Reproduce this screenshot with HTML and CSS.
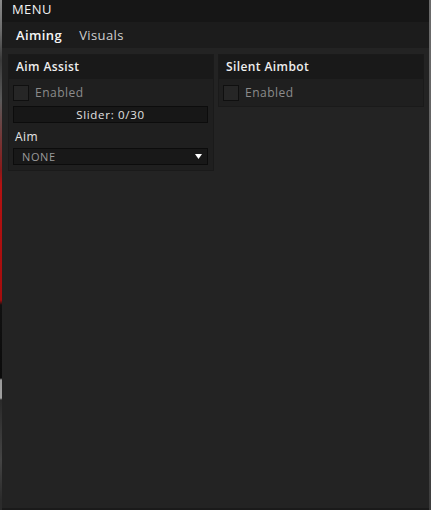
FILE: index.html
```html
<!DOCTYPE html>
<html>
<head>
<meta charset="utf-8">
<link rel="stylesheet" href="styles.css">
</head>
<body>
<div class="window">
  <div class="titlebar">MENU</div>
  <div class="tabs">
    <span class="tab active">Aiming</span>
    <span class="tab">Visuals</span>
  </div>
  <div class="content">
    <section class="panel">
      <div class="panel-head">Aim Assist</div>
      <div class="panel-body">
        <label class="check"><span class="box"></span><span class="check-label">Enabled</span></label>
        <div class="slider">Slider: 0/30</div>
        <div class="field-label">Aim</div>
        <div class="dropdown"><span>NONE</span><svg class="caret" width="7" height="5" viewBox="0 0 7 5"><path d="M0 0H7L3.5 5Z" fill="#fff"/></svg></div>
      </div>
    </section>
    <section class="panel">
      <div class="panel-head">Silent Aimbot</div>
      <div class="panel-body">
        <label class="check"><span class="box"></span><span class="check-label">Enabled</span></label>
      </div>
    </section>
  </div>
</div>
</body>
</html>
```
FILE: styles.css
```css
html, body {
  margin: 0;
  padding: 0;
}
body {
  width: 431px;
  height: 510px;
  overflow: hidden;
  background:
    linear-gradient(to bottom, #8a8a8a 0, #6d6d6d 30px, #3a3a3a 60px, #5a5a5a 100px, #8a1a1a 170px, #b31212 185px, #a50d0d 300px, #111 305px, #0b0b0b 378px, #9a9a9a 380px, #a0a0a0 398px, #2a2a2a 400px, #444 460px, #2b2b2b 500px) left top / 2px 100% no-repeat,
    linear-gradient(to bottom, #6a6a6a 0, #5a5a5a 300px, #3c3c3c 510px) right top / 2px 100% no-repeat,
    #1a1a1a;
  font-family: "Open Sans", "DejaVu Sans", sans-serif;
  color: #e6e6e6;
}
.window {
  box-sizing: border-box;
  width: 427px;
  height: 508px;
  margin-left: 2px;
  background: #232323;
  display: flex;
  flex-direction: column;
}
.titlebar {
  height: 22px;
  flex: none;
  background: #161616;
  padding-left: 10px;
  font-size: 13px;
  line-height: 18px;
  color: #f2f2f2;
  letter-spacing: 0.4px;
}
.tabs {
  height: 26px;
  flex: none;
  background: #1c1c1c;
  display: flex;
  align-items: center;
  gap: 17px;
  padding-left: 14px;
  padding-bottom: 1px;
  box-sizing: border-box;
}
.tab {
  font-size: 13px;
  color: #d0d0d0;
  letter-spacing: 0.4px;
}
.tab.active {
  color: #f5f5f5;
  font-weight: 600;
}
.content {
  padding: 6px 5px 0 6px;
  display: grid;
  grid-template-columns: 206px 206px;
  column-gap: 4px;
  align-items: start;
}
.panel {
  background: #1f1f1f;
  border: 1px solid #1a1a1a;
}
.panel-head {
  height: 24px;
  background: #191919;
  padding-left: 7px;
  font-size: 12px;
  font-weight: 600;
  line-height: 24px;
  color: #eeeeee;
  letter-spacing: 0.4px;
}
.panel-body {
  padding: 6px 5px 5px 4px;
  display: flex;
  flex-direction: column;
}
.check {
  display: flex;
  align-items: center;
  gap: 6px;
  height: 16px;
}
.box {
  width: 14px;
  height: 14px;
  border: 1px solid #0f0f0f;
  background: #262626;
}
.check-label {
  font-size: 12px;
  line-height: 14px;
  color: #8c8c8c;
  letter-spacing: 0.5px;
}
.slider {
  margin-top: 5px;
  height: 15px;
  border: 1px solid #0c0c0c;
  background: #171717;
  font-size: 11.5px;
  line-height: 15px;
  text-align: center;
  color: #e2e2e2;
  letter-spacing: 0.7px;
}
.field-label {
  margin-top: 6px;
  height: 19px;
  padding-left: 2px;
  font-size: 12px;
  line-height: 15px;
  color: #e6e6e6;
  letter-spacing: 0.4px;
}
.dropdown {
  height: 15px;
  border: 1px solid #0c0c0c;
  background: #181818;
  display: flex;
  align-items: center;
  justify-content: space-between;
  padding: 0 5px 0 8px;
  font-size: 11px;
  color: #9a9a9a;
  letter-spacing: 0.6px;
}
.caret {
  display: block;
}
```
